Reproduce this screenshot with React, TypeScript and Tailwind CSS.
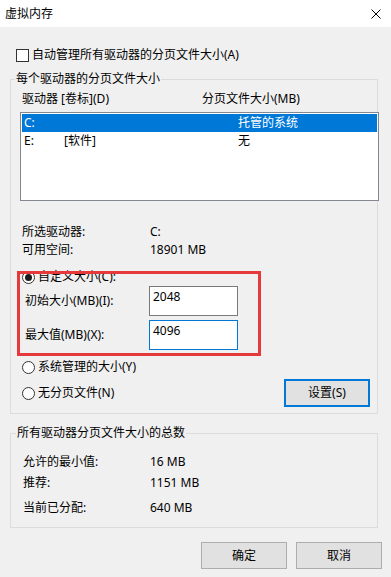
import React from "react";

function Radio({ checked }: { checked?: boolean }) {
  return (
    <span className="w-[13px] h-[13px] rounded-full border border-[#333333] bg-white flex items-center justify-center shrink-0">
      {checked && <span className="w-[7px] h-[7px] rounded-full bg-[#1a1a1a]" />}
    </span>
  );
}

export default function App() {
  return (
    <div className="relative w-[391px] h-[577px] bg-[#f0f0f0] text-[12px] leading-[16px] text-black overflow-hidden font-['Noto_Sans','Noto_Sans_CJK_SC',sans-serif]">
      {/* Title bar */}
      <div className="h-[27px] bg-white flex items-center pl-[5px] pr-[10px]">
        <span className="flex-1">虚拟内存</span>
        <svg width="10" height="10" viewBox="0 0 10 10">
          <path d="M0.5 0.5 L9.5 9.5 M9.5 0.5 L0.5 9.5" stroke="#000" strokeWidth="1" />
        </svg>
      </div>

      {/* Auto manage checkbox */}
      <div className="mt-[20px] h-[16px] flex items-center pl-[16px]">
        <span className="w-[13px] h-[13px] border border-[#333333] bg-white shrink-0" />
        <span className="ml-[3px]">自动管理所有驱动器的分页文件大小(A)</span>
      </div>

      {/* Group 1 */}
      <fieldset className="mt-[8px] ml-[10px] w-[368px] border border-[#dcdcdc] pb-[6px]">
        <legend className="ml-[4px] px-[1px] h-[16px]">每个驱动器的分页文件大小</legend>

        <div className="mt-[4px] h-[16px] flex pl-[11px]">
          <span className="w-[180px]">驱动器 [卷标](D)</span>
          <span>分页文件大小(MB)</span>
        </div>

        <div className="mt-[5px] ml-[9px] mr-[-2px] h-[89px] border border-[#828790] bg-white p-[1px]">
          <div className="h-[18px] flex items-center bg-[#0078d7] text-white pl-[2px]">
            <span className="w-[214px]">C:</span>
            <span>托管的系统</span>
          </div>
          <div className="h-[18px] flex items-center pl-[2px]">
            <span className="w-[40px]">E:</span>
            <span className="w-[174px]">[软件]</span>
            <span>无</span>
          </div>
        </div>

        <div className="mt-[22px] h-[18px] flex items-center pl-[11px]">
          <span className="w-[128px]">所选驱动器:</span>
          <span>C:</span>
        </div>
        <div className="h-[18px] flex items-center pl-[11px]">
          <span className="w-[128px]">可用空间:</span>
          <span>18901 MB</span>
        </div>

        <div className="mt-[10px] h-[16px] flex items-center pl-[11px]">
          <Radio checked />
          <span className="ml-[3px]">自定义大小(C):</span>
        </div>

        <div className="mt-[1px] h-[30px] flex items-center pl-[14px]">
          <span className="w-[124px]">初始大小(MB)(I):</span>
          <div className="w-[89px] h-[30px] border border-[#7a7a7a] bg-white pl-[3px] pt-[2px]">2048</div>
        </div>
        <div className="mt-[4px] h-[30px] flex items-center pl-[14px]">
          <span className="w-[124px]">最大值(MB)(X):</span>
          <div className="w-[89px] h-[30px] border border-[#0078d7] bg-white pl-[3px] pt-[2px]">4096</div>
        </div>

        <div className="mt-[9px] h-[16px] flex items-center pl-[11px]">
          <Radio />
          <span className="ml-[3px]">系统管理的大小(Y)</span>
        </div>

        <div className="mt-[4px] h-[28px] flex items-center pl-[11px] pr-[7px]">
          <Radio />
          <span className="ml-[3px] flex-1">无分页文件(N)</span>
          <button className="w-[86px] h-[28px] border-2 border-[#0078d7] bg-[#e1e1e1] flex items-center justify-center">
            设置(S)
          </button>
        </div>
      </fieldset>

      {/* Group 2 */}
      <fieldset className="mt-[11px] ml-[10px] w-[368px] border border-[#dcdcdc] pb-[10px]">
        <legend className="ml-[5px] px-[1px] h-[16px]">所有驱动器分页文件大小的总数</legend>
        <div className="mt-[12px] h-[18px] flex items-center pl-[12px]">
          <span className="w-[127px]">允许的最小值:</span>
          <span>16 MB</span>
        </div>
        <div className="mt-[3px] h-[18px] flex items-center pl-[12px]">
          <span className="w-[127px]">推荐:</span>
          <span>1151 MB</span>
        </div>
        <div className="mt-[7px] h-[18px] flex items-center pl-[12px]">
          <span className="w-[127px]">当前已分配:</span>
          <span>640 MB</span>
        </div>
      </fieldset>

      {/* Bottom buttons */}
      <div className="mt-[14px] flex justify-end gap-[9px] pr-[9px]">
        <button className="w-[86px] h-[27px] border border-[#adadad] bg-[#e1e1e1] flex items-center justify-center">
          确定
        </button>
        <button className="w-[86px] h-[27px] border border-[#adadad] bg-[#e1e1e1] flex items-center justify-center">
          取消
        </button>
      </div>

      {/* Red annotation box overlay */}
      <div className="absolute left-[17px] top-[271px] w-[244px] h-[85px] border-[3px] border-[#e5393c] pointer-events-none" />
    </div>
  );
}
